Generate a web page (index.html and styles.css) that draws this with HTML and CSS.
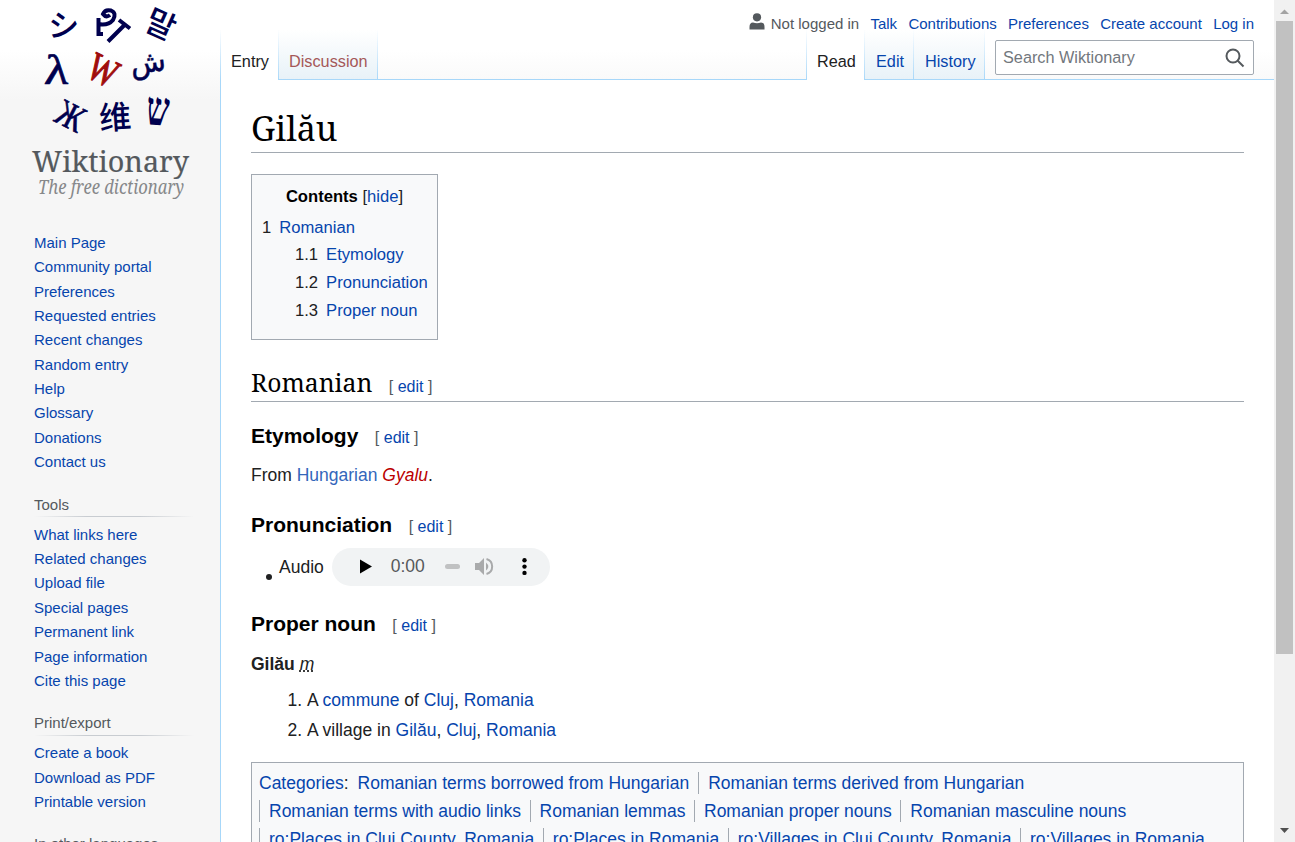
FILE: index.html
```html
<!DOCTYPE html>
<html lang="en">
<head>
<meta charset="utf-8">
<title>Gilău - Wiktionary</title>
<link rel="stylesheet" href="styles.css">
</head>
<body>
<div class="page">
  <aside class="sidebar">
    <svg class="logo" width="220" height="210" viewBox="0 0 220 210">
      <g fill="#00004e" text-anchor="middle" font-weight="700">
        <text transform="translate(63 37) rotate(3)" font-family="Noto Sans CJK JP" font-size="31" font-weight="500">シ</text>
        <g fill="none" stroke="#00004e" stroke-width="4"><path d="M103 34H98.500V18M98 24Q108 26 113 20Q117 13 111 10.500Q105 9 103 14Q106 18 110 15M119 20L130 28.500M125 24.500L108 41.500"/></g>
        <text transform="translate(156 35) rotate(24)" font-family="Noto Sans CJK KR" font-size="32" font-weight="500">말</text>
        <text transform="translate(56 84) skewX(-4) scale(1.2 1)" font-family="Liberation Serif" font-size="42" font-weight="400" stroke="#00004e" stroke-width=".7">λ</text>
        <text transform="translate(97 82) rotate(27) scale(.9 1.18)" font-family="Liberation Serif" font-size="34" fill="#a00d0d" font-weight="400" stroke="#a00d0d">W</text>
        <text transform="translate(149 72) rotate(-7)" font-family="DejaVu Sans" font-size="29" font-weight="400" stroke="#00004e" stroke-width=".5">ش</text>
        <text transform="translate(65 127) rotate(27) scale(.9 1.1)" font-family="Liberation Serif" font-size="34" font-weight="400" stroke="#00004e" stroke-width=".6">Ж</text>
        <text transform="translate(116 129) rotate(-4)" font-family="Noto Sans CJK SC" font-size="32" font-weight="500">维</text>
        <text transform="translate(157 125) rotate(4) scale(.95 1.4)" font-family="Liberation Serif" font-size="34">ש</text>
      </g>
      <text class="word" x="32" y="171.500" font-size="28.500" textLength="157" lengthAdjust="spacingAndGlyphs">Wiktionary</text>
      <text class="tag" x="38" y="194" font-size="19.500" textLength="146" lengthAdjust="spacingAndGlyphs">The free dictionary</text>
    </svg>
    <nav class="portal">
      <a>Main Page</a><a>Community portal</a><a>Preferences</a><a>Requested entries</a><a>Recent changes</a><a>Random entry</a><a>Help</a><a>Glossary</a><a>Donations</a><a>Contact us</a>
    </nav>
    <nav class="portal">
      <h3>Tools</h3>
      <a>What links here</a><a>Related changes</a><a>Upload file</a><a>Special pages</a><a>Permanent link</a><a>Page information</a><a>Cite this page</a>
    </nav>
    <nav class="portal">
      <h3>Print/export</h3>
      <a>Create a book</a><a>Download as PDF</a><a>Printable version</a>
    </nav>
    <nav class="portal"><h3>In other languages</h3></nav>
  </aside>
  <div class="main">
    <header class="head">
      <div class="personal">
        <span class="user"><svg width="16" height="17" viewBox="0 0 16 17"><circle cx="8" cy="4.300" r="4.100"/><path d="M.5 16.500V14Q.5 9.500 4 9.500Q8 11 12 9.500Q15.500 9.500 15.500 14V16.500Z"/></svg>Not logged in</span>
        <a>Talk</a><a>Contributions</a><a>Preferences</a><a>Create account</a><a>Log in</a>
      </div>
      <div class="tabs">
        <a class="tab current entry">Entry</a><a class="tab new">Discussion</a>
        <span class="fill"></span>
        <a class="tab current read">Read</a><a class="tab edit">Edit</a><a class="tab history">History</a>
        <div class="rest"><div class="search"><span>Search Wiktionary</span>
          <svg width="20" height="20" viewBox="0 0 20 20" fill="none" stroke="#54595d" stroke-width="2"><circle cx="8" cy="8" r="6.500"/><path d="M12.500 12.500L18.500 18.500"/></svg></div></div>
      </div>
    </header>
    <main class="content">
      <h1>Gilău</h1>
      <div class="toc">
        <div class="toc-title"><b>Contents</b> [<a>hide</a>]</div>
        <div class="toc-row"><span>1</span><a>Romanian</a></div>
        <div class="toc-row sub"><span>1.1</span><a>Etymology</a></div>
        <div class="toc-row sub"><span>1.2</span><a>Pronunciation</a></div>
        <div class="toc-row sub"><span>1.3</span><a>Proper noun</a></div>
      </div>
      <h2><span class="serif">Romanian</span><span class="es">[ <a>edit</a> ]</span></h2>
      <h3>Etymology<span class="es">[ <a>edit</a> ]</span></h3>
      <p>From <a class="ext">Hungarian</a> <a class="red">Gyalu</a>.</p>
      <h3 class="pron">Pronunciation<span class="es">[ <a>edit</a> ]</span></h3>
      <div class="audio-row"><i class="bullet"></i><span class="label">Audio</span>
        <div class="player">
          <svg width="218" height="38" viewBox="0 0 218 38">
            <path d="M28 11.500V25.500L40 18.500Z" fill="#000"/>
            <rect x="113" y="16" width="15" height="5" rx="2.500" fill="#c0c1c2"/>
            <path d="M143 15V22H147L152 27V10L147 15Z" fill="#a9aaab"/>
            <path d="M154.500 11A7.800 7.800 0 0 1 154.500 26" fill="#f1f3f4" stroke="#a9aaab" stroke-width="2"/>
            <path d="M154 14.500Q158.500 18.500 154 22.500Z" fill="#a9aaab"/>
            <g fill="#000"><circle cx="192.500" cy="12.300" r="2.200"/><circle cx="192.500" cy="18.600" r="2.200"/><circle cx="192.500" cy="24.900" r="2.200"/></g>
          </svg>
          <span class="time">0:00</span>
        </div>
      </div>
      <h3 class="noun">Proper noun<span class="es">[ <a>edit</a> ]</span></h3>
      <p class="headword"><b>Gilău</b> <abbr>m</abbr></p>
      <ol>
        <li>A <a>commune</a> of <a>Cluj</a>, <a>Romania</a></li>
        <li>A village in <a>Gilău</a>, <a>Cluj</a>, <a>Romania</a></li>
      </ol>
      <div class="cats">
        <div class="cat-row"><span class="cat-title"><a>Categories</a>:</span><a class="first">Romanian terms borrowed from Hungarian</a><a>Romanian terms derived from Hungarian</a></div>
        <div class="cat-row"><a>Romanian terms with audio links</a><a>Romanian lemmas</a><a>Romanian proper nouns</a><a>Romanian masculine nouns</a></div>
        <div class="cat-row"><a>ro:Places in Cluj County, Romania</a><a>ro:Places in Romania</a><a>ro:Villages in Cluj County, Romania</a><a>ro:Villages in Romania</a></div>
      </div>
    </main>
  </div>
  <div class="scrollbar">
    <svg width="21" height="21"><path d="M6 14H15L10.500 9.500Z" fill="#a3a3a3"/></svg>
    <div class="thumb"></div>
    <svg class="down" width="21" height="21"><path d="M6 7H15L10.500 12Z" fill="#505050"/></svg>
  </div>
</div>
</body>
</html>
```
FILE: styles.css
```css
* { box-sizing: border-box; }
body { margin: 0; font-family: "Liberation Sans", Arial, sans-serif; color: #202122; }
a { color: #0645ad; text-decoration: none; }
.page { display: flex; height: 842px; overflow: hidden; background: linear-gradient(#fff 50px, #f6f6f6 100px); }

.sidebar { width: 220px; flex: none; }
.logo { display: block; }
.word, .tag { font-family: "Noto Serif", "Liberation Serif", serif; fill: #54595d; }
.word { stroke: #54595d; stroke-width: .2px; }
.tag { font-style: italic; fill: #86888a; }
.portal { padding-left: 34px; margin-top: 18px; font-size: 15px; }
.logo + .portal { margin-top: 20.8px; }
.portal a { display: block; line-height: 24.37px; white-space: nowrap; }
.portal h3 { margin: 0 26px 5.6px 0; height: 24.5px; line-height: 24.5px; font-size: 15px; font-weight: 400; color: #54595d; background: linear-gradient(to right, rgba(200,204,209,0), #c8ccd1 33%, #c8ccd1 66%, rgba(200,204,209,0)) bottom / 100% 1px no-repeat; }

.main { width: 1054px; flex: none; display: flex; flex-direction: column; }
.head { height: 80px; flex: none; display: flex; flex-direction: column; }
.personal { position: relative; z-index: 1; display: flex; justify-content: flex-end; align-items: center; gap: 11.25px; height: 30px; padding: 17px 20px 0 0; line-height: 14px; font-size: 15px; white-space: nowrap; }
.user { display: flex; align-items: center; gap: 6px; color: #54595d; }
.user svg { fill: #54595d; margin-top: -4px; }
.tabs { display: flex; height: 50px; font-size: 16.25px; }
.tab { height: 50px; padding: 21px 0 0 10px; line-height: 20px; border-right: 1px solid; border-bottom: 1px solid #a7d7f9; border-image: linear-gradient(#fff, #a7d7f9) 1; background: linear-gradient(#fff, #e8f2f8); white-space: nowrap; }
.current { color: #202122; background: #fff; border-bottom: 0; }
.entry { width: 59px; border-left: 1px solid; }
.new { width: 99px; color: #a55858; }
.fill { flex: 1; border-bottom: 1px solid #a7d7f9; }
.read { width: 59px; border-left: 1px solid; }
.edit { width: 49px; padding-left: 11px; }
.history { width: 71px; padding-left: 11px; }
.rest { width: 289px; padding: 10px 20px 0 10px; border-bottom: 1px solid #a7d7f9; }
.search { height: 35px; display: flex; align-items: center; justify-content: space-between; padding: 0 8px 0 7px; border: 1px solid #a2a9b1; border-radius: 2px; background: #fff; color: #72777d; }

.content { flex: 1; background: #fff; border-left: 1px solid #a7d7f9; padding: 25px 30px 0; font-size: 17.5px; line-height: 28px; }
h1, h2, h3, p, ol { margin: 0; }
h1, .serif { font-family: Georgia, "Noto Serif", "Liberation Serif", serif; font-weight: 400; color: #000; }
h1 { font-size: 34px; line-height: 46px; height: 48px; border-bottom: 1px solid #a2a9b1; }
.toc { width: 187px; height: 166px; margin-top: 21px; padding: 7.6px 10px; border: 1px solid #a2a9b1; background: #f8f9fa; font-size: 16.625px; }
.toc-title { text-align: center; height: 31px; }
.toc-title b { color: #000; }
.toc-row { display: flex; gap: 8px; height: 27.7px; white-space: nowrap; }
.sub { padding-left: 33px; }
h2 { height: 35px; margin-top: 27px; font-size: 24.7px; line-height: 31px; border-bottom: 1px solid #a2a9b1; font-weight: 400; }
h3 { font-size: 21px; line-height: 34px; color: #000; margin-top: 17px; }
.portal h3 { margin-top: 0; }
.es { font-size: 16px; font-weight: 400; margin-left: 16.5px; color: #54595d; }
p { margin-top: 6px; }
.ext { color: #36b; }
.red { color: #ba0000; font-style: italic; }
.pron { margin-top: 19px; }
.audio-row { display: flex; align-items: center; height: 38px; margin-top: 4px; padding-left: 15px; }
.bullet { width: 6px; height: 6px; border-radius: 50%; background: #202122; margin: 20px 7px 0 0; }
.player { position: relative; width: 218px; height: 38px; margin-left: 8px; border-radius: 19px; background: #f1f3f4; }
.time { position: absolute; left: 59px; top: 4px; color: #55585a; }
.noun { margin-top: 21px; }
.headword { margin-top: 7px; }
abbr { font-style: italic; text-decoration: underline dotted; }
ol { margin-top: 8px; padding-left: 56px; }
li { margin-bottom: 2px; }
.cats { margin-top: 18px; height: 120px; border: 1px solid #a2a9b1; background: #f8f9fa; padding: 6px 7px; }
.cat-row { display: flex; align-items: center; height: 28px; white-space: nowrap; }
.cat-row > a { line-height: 22px; padding: 0 8.6px 0 9px; border-left: 1px solid #a2a9b1; }
.cat-row > .first { border: 0; padding-right: 9px; }

.scrollbar { width: 21px; flex: none; background: #f1f1f1; display: flex; flex-direction: column; }
.thumb { height: 633px; margin: 0 2px; background: #c1c1c1; }
.down { margin-top: auto; }
```
